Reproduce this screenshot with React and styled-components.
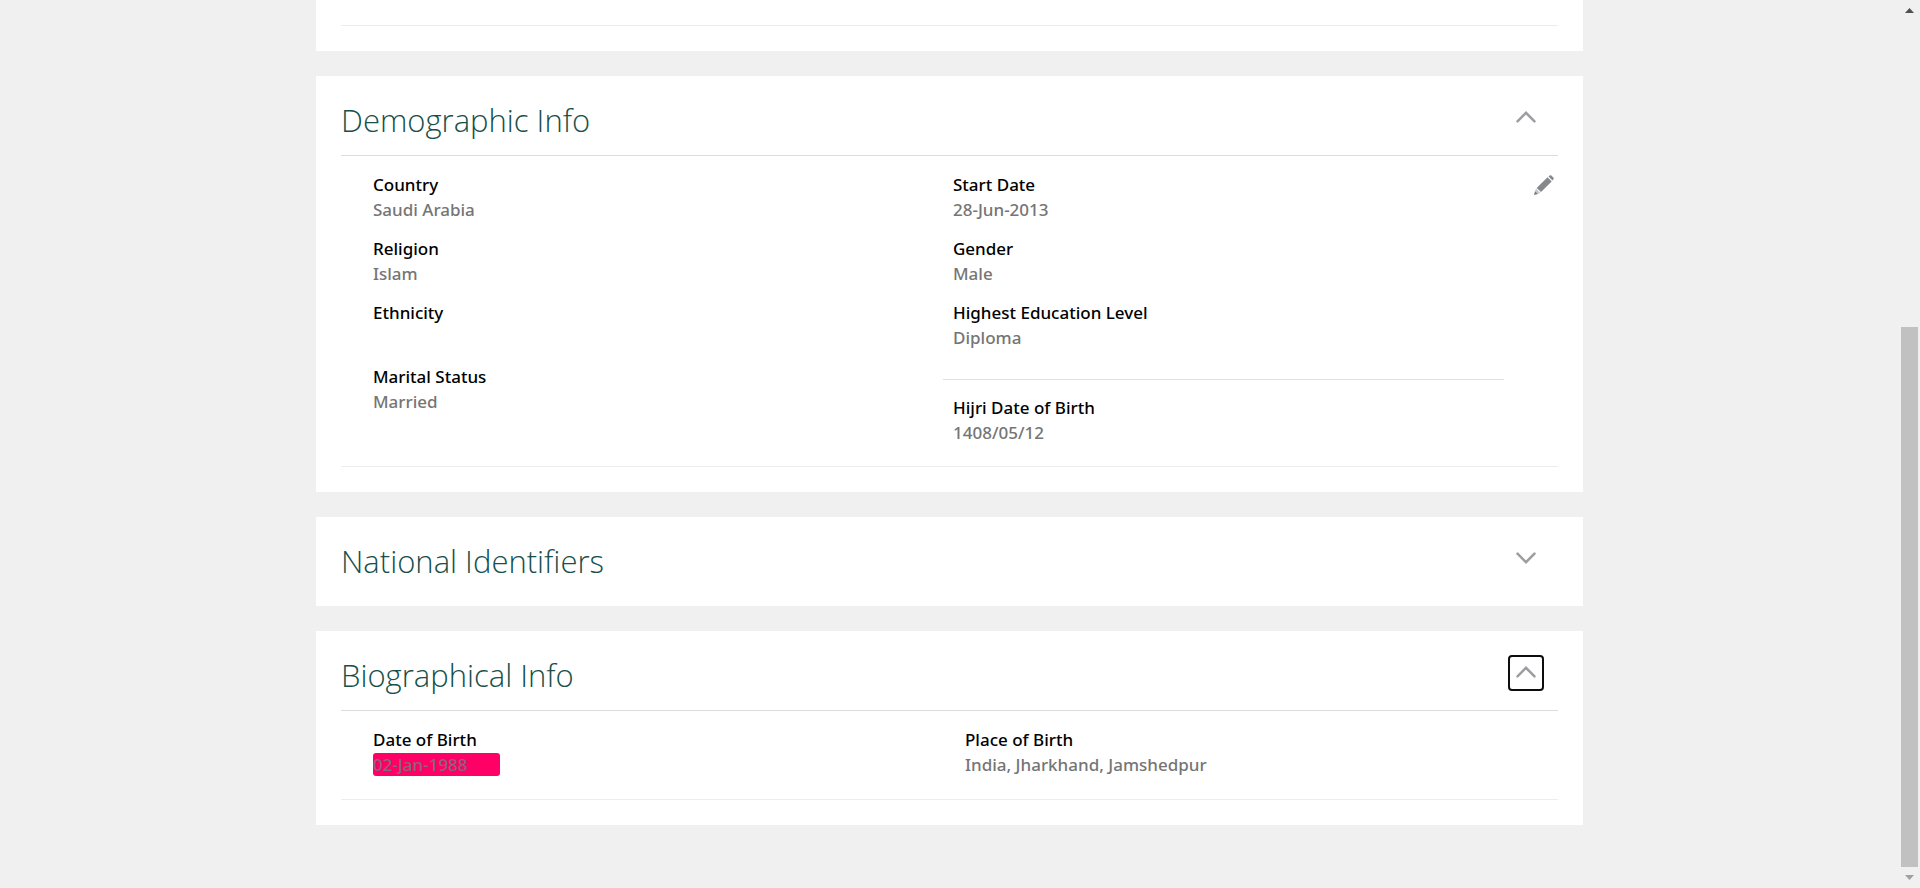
import React, { useState } from "react";
import styled, { createGlobalStyle } from "styled-components";

const GlobalStyle = createGlobalStyle`
  * { box-sizing: border-box; }
  body {
    margin: 0;
    background: #f0f0f0;
    font-family: "Open Sans", "Noto Sans", sans-serif;
  }
`;

const Page = styled.div`
  display: flex;
  height: 100vh;
`;

const Content = styled.main`
  flex: 1;
  min-width: 0;
  display: flex;
  flex-direction: column;
  align-items: center;
  gap: 25px;
  overflow-y: auto;
  scrollbar-width: none;
`;

const Card = styled.section`
  flex: none;
  width: 100%;
  max-width: 1267px;
  padding: 0 25px ${(p) => (p.$collapsed ? 10 : 25)}px;
  background: #fff;
`;

const CardHeader = styled.header`
  display: flex;
  align-items: flex-start;
  justify-content: space-between;
  height: ${(p) => (p.$collapsed ? 79 : 80)}px;
  padding: 24px 14px 0 0;
  border-bottom: ${(p) => (p.$collapsed ? "none" : "1px solid #d9dddd")};
`;

const Title = styled.h2`
  margin: 0;
  color: #17504a;
  font-size: 31px;
  font-weight: 300;
  line-height: 40px;
`;

const IconButton = styled.button`
  display: flex;
  align-items: center;
  justify-content: center;
  width: 36px;
  height: 36px;
  padding: 0 0 2px;
  border: 2px solid ${(p) => (p.$focused ? "#0c0d0f" : "transparent")};
  border-radius: 4px;
  background: none;
  cursor: pointer;
`;

const CardBody = styled.div`
  display: flex;
  align-items: flex-start;
  padding: 16px 0 21px 22px;
  border-bottom: 1px solid #ededed;
`;

const PreviousBody = styled.div`
  height: 26px;
  border-bottom: 1px solid #ededed;
`;

const Columns = styled.div`
  flex: 1;
  display: grid;
  grid-template-columns: 1fr 1fr;
  column-gap: 19px;
  padding-right: ${(p) => (p.$wide ? 30 : 0)}px;
`;

const FieldList = styled.dl`
  display: flex;
  flex-direction: column;
  gap: 14px;
  margin: 0;
  font-family: "Noto Sans", "Open Sans", sans-serif;
  font-size: 17px;
  font-weight: 500;
  line-height: 25px;
`;

const Field = styled.div`
  padding: 0 10px;
`;

const SeparatedField = styled(Field)`
  margin-top: 15px;
  padding-top: 15px;
  border-top: 1px solid #e0e0e0;
`;

const Label = styled.dt`
  color: #000;
`;

const Value = styled.dd`
  min-height: 25px;
  margin: 0;
  color: #757575;
`;

const Highlight = styled.mark`
  display: block;
  width: 127px;
  margin: 1px 0;
  border-radius: 3px;
  background: #ff0066;
  color: #8a6478;
  line-height: 23px;
`;

const EditCell = styled.div`
  display: flex;
  justify-content: flex-end;
  width: 54px;
`;

const EditButton = styled(IconButton)`
  width: 28px;
  height: 28px;
`;

const Scrollbar = styled.div`
  flex: none;
  display: flex;
  flex-direction: column;
  width: 21px;
  padding: 0 2px;
`;

const ScrollArrow = styled.div`
  display: flex;
  flex: none;
  align-items: center;
  justify-content: center;
  height: 21px;
  color: ${(p) => p.$tone};
`;

const ScrollSpace = styled.div`
  flex: 306;
`;

const ScrollThumb = styled.div`
  flex: 540;
  background: #c1c1c1;
`;

function Chevron({ open }) {
  return (
    <svg width="20" height="12" viewBox="0 0 20 12" fill="none" stroke="#9b9da0" strokeWidth="2.5" strokeLinecap="round">
      <path d={open ? "M1.5 10.3 10 1.8l8.5 8.5" : "M1.5 1.7 10 10.2l8.5-8.5"} />
    </svg>
  );
}

function Pencil() {
  return (
    <svg width="20" height="20" viewBox="0 0 20 20">
      <path d="M14.5 1.5 16 .3Q16.800 0 17.400.6l2.100 2.100q.6.700.1 1.400L18.500 5.400Z" fill="#85888d" />
      <path d="m13.500 2.300 4.200 4.200L7 17.100 2.700 12.900Z" fill="#85888d" />
      <path d="M2 13.500 6.400 17.900 2.600 19.200.8 17.300Z" fill="#c6c8ca" />
      <path d="m1 16.200 2.800 2.800L0 20Z" fill="#77797d" />
    </svg>
  );
}

function Panel({ title, initialOpen = false, focused = false, children }) {
  const [open, setOpen] = useState(initialOpen);
  return (
    <Card $collapsed={!open} aria-label={title}>
      <CardHeader $collapsed={!open}>
        <Title>{title}</Title>
        <IconButton
          type="button"
          $focused={focused}
          aria-expanded={open}
          aria-label={title}
          onClick={() => setOpen(!open)}
        >
          <Chevron open={open} />
        </IconButton>
      </CardHeader>
      {open && children}
    </Card>
  );
}

function Entry({ label, value, highlighted = false, as: Wrapper = Field }) {
  return (
    <Wrapper>
      <Label>{label}</Label>
      <Value>{highlighted ? <Highlight>{value}</Highlight> : value}</Value>
    </Wrapper>
  );
}

export default function App() {
  return (
    <>
      <GlobalStyle />
      <Page>
        <Content>
          <Card>
            <PreviousBody />
          </Card>

          <Panel title="Demographic Info" initialOpen>
            <CardBody>
              <Columns>
                <FieldList>
                  <Entry label="Country" value="Saudi Arabia" />
                  <Entry label="Religion" value="Islam" />
                  <Entry label="Ethnicity" value="" />
                  <Entry label="Marital Status" value="Married" />
                </FieldList>
                <FieldList>
                  <Entry label="Start Date" value="28-Jun-2013" />
                  <Entry label="Gender" value="Male" />
                  <Entry label="Highest Education Level" value="Diploma" />
                  <Entry label="Hijri Date of Birth" value="1408/05/12" as={SeparatedField} />
                </FieldList>
              </Columns>
              <EditCell>
                <EditButton type="button" aria-label="Edit">
                  <Pencil />
                </EditButton>
              </EditCell>
            </CardBody>
          </Panel>

          <Panel title="National Identifiers" />

          <Panel title="Biographical Info" initialOpen focused>
            <CardBody>
              <Columns $wide>
                <FieldList>
                  <Entry label="Date of Birth" value="02-Jan-1988" highlighted />
                </FieldList>
                <FieldList>
                  <Entry label="Place of Birth" value="India, Jharkhand, Jamshedpur" />
                </FieldList>
              </Columns>
            </CardBody>
          </Panel>
        </Content>

        <Scrollbar aria-hidden="true">
          <ScrollArrow $tone="#505050">
            <svg width="9" height="5" viewBox="0 0 9 5" fill="currentColor"><path d="M4.500 0 9 5H0Z" /></svg>
          </ScrollArrow>
          <ScrollSpace />
          <ScrollThumb />
          <ScrollArrow $tone="#a0a0a0">
            <svg width="9" height="5" viewBox="0 0 9 5" fill="currentColor"><path d="M4.500 5 9 0H0Z" /></svg>
          </ScrollArrow>
        </Scrollbar>
      </Page>
    </>
  );
}
